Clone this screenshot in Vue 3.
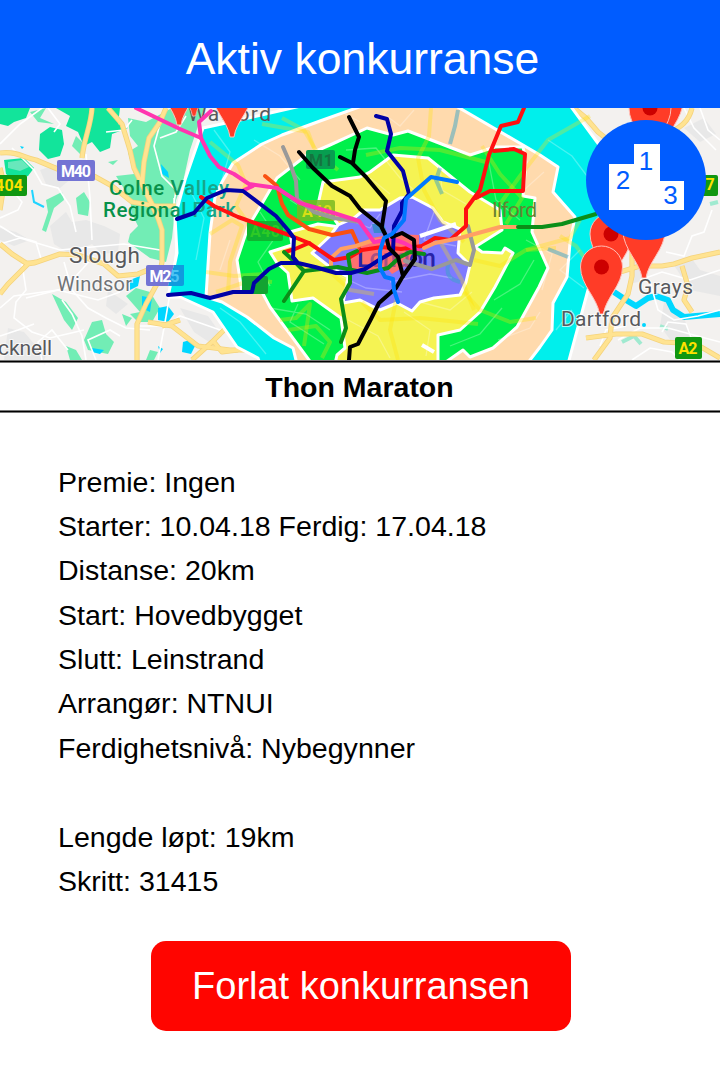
<script setup>
const details = [
  'Premie: Ingen',
  'Starter: 10.04.18 Ferdig: 17.04.18',
  'Distanse: 20km',
  'Start: Hovedbygget',
  'Slutt: Leinstrand',
  'Arrangør: NTNUI',
  'Ferdighetsnivå: Nybegynner',
  '',
  'Lengde løpt: 19km',
  'Skritt: 31415',
]

const woods = [
  'M0 108H30L26 118L14 122L8 126L0 124Z',
  'M40 134L50 127L62 130L64 144L60 156L48 159L39 150Z',
  'M56 108H120L118 124L128 128L112 134L110 148L100 152L92 142L84 146L78 132L66 126L70 116Z',
  'M4 160L24 158L34 168L28 176L14 180L6 174Z',
]
const parks = [
  'M76 136L86 146L80 154L72 146Z',
  'M76 198L84 192L90 202L88 216L78 214Z',
  'M46 200L62 192L64 200L54 208L46 232L42 230L48 212Z',
  'M30 112L46 108L40 118L54 124L38 122Z',
  'M128 118L146 122L172 108H204L190 150L183 182L176 200L172 238L166 262L150 258L128 242L130 234L138 226L132 214L130 198L116 176L134 174L128 152L138 146L130 136Z',
  'M52 294L66 302L78 318L72 330L64 320Z',
  'M92 322L102 320L106 334L114 342L108 354L88 350L84 340Z',
  'M126 296L136 288L150 292L160 308L152 322L138 322L130 314L140 312Z',
  'M66 346L76 350L82 360H70Z',
  'M122 314L132 318L126 326Z',
  'M150 350L158 352L154 360H146Z',
  'M108 162L118 160L113 165Z',
]
const builtUp = [
  'M40 170L58 164L72 178L60 188L46 184Z',
  'M50 226L66 212L72 222L86 220L104 226L120 234L118 252L102 254L92 244L70 254L54 244Z',
  'M0 228L16 232L30 240L14 246L0 240Z',
  'M8 328L24 332L36 346L48 350L44 360H4Z',
  'M108 290L128 304L116 314L106 306Z',
  'M634 250L650 254L646 280L630 284Z',
  'M672 262L690 256L700 270L720 276V296L690 290Z',
  'M664 302L680 310L692 336L672 342L660 326Z',
  'M180 308L208 316L222 336L212 344L194 332Z',
  'M684 128L704 118L716 134L700 142Z',
]
const waters = [
  'M161 164L168 172L169 178L162 174Z',
  'M130 280L140 276L138 286L130 290Z',
  'M142 296L152 298L150 312L142 308Z',
  'M158 308L168 306L174 314L168 322L158 320Z',
  'M183 342L190 340L195 346L191 354L182 352Z',
  'M92 348L104 350L100 354L92 352Z',
  'M158 346L163 349L160 353Z',
  'M20 146L24 147L22 149Z',
]
const minorRoads = [
  'M0 144L20 124L42 108', 'M12 148L34 170L42 184L58 188L70 206L76 232',
  'M48 108L60 124L54 132', 'M86 154L90 198L92 240', 'M0 244L20 238L60 250L124 244L160 250',
  'M0 226L16 236L36 242L42 262', 'M22 264L26 290L16 302L14 318L32 332L50 338L84 330',
  'M26 298L66 288L76 276L94 256', 'M64 262L72 290L88 308L106 318L126 328L150 330',
  'M0 308L14 296L58 290L98 300L120 292', 'M62 300L72 314L82 336L86 360',
  'M0 336L18 330L34 324', 'M42 360L38 342L52 330L68 350', 'M96 360L88 340L110 330L120 336',
  'M160 124L154 146L162 176L176 190L172 216', 'M186 116L176 132L160 138',
  'M174 198L178 236L172 282L164 328L158 360', 'M140 326L166 326L180 316L220 330L242 322',
  'M106 132L124 130L132 120', 'M0 178L12 190L22 202L18 210L0 218',
  'M618 340L640 328L668 328L690 334L720 342', 'M632 360L650 348L672 352L680 360',
  'M640 280L662 272L690 280L720 270', 'M666 252L684 256L692 236L704 232L712 210',
  'M650 282L658 310L674 320L698 316L720 310', 'M600 346L606 330L626 326',
  'M684 108L694 128L716 150', 'M662 332L668 322L686 324L692 340', 'M700 108L708 130L720 140',
]
const mainRoads = [
  'M0 153C18 151 24 158 36 160L60 170', 'M94 176L112 186L132 202L156 206L176 206',
  'M92 108C91 126 84 138 82 158', 'M108 108L122 124L130 150L134 168L146 192L158 218L162 230L162 262L158 282L146 304L137 324V360',
  'M166 108L160 122L149 138L144 162L142 184L158 216', 'M0 168L4 184L0 210',
  'M0 244L12 254L26 263H34L60 254L78 255L104 264L118 276L138 274L148 270', 'M0 294L8 284L28 264L36 262',
  'M148 322L172 326L198 346L230 350L258 350', 'M162 326L180 320', 'M192 360L212 342L220 334L236 318L264 306',
  'M214 342L222 352L238 350', 'M574 108L586 118L598 132L608 140', 'M692 108C688 124 678 128 668 134',
  'M632 250L632 276L628 294L612 318L610 338L594 360', 'M620 272L640 266L662 266L674 264L692 258L720 252',
  'M682 266L688 286L684 300L692 312', 'M586 338L616 334L642 334L664 342L696 344L720 358',
]
const zones = [
  { name: 'cyan', d: 'M203 128L240 120L327 100H566L572 108L597 142L625 185L606 235L588 290L568 364H260L258 358L237 347L213 312L180 297L168 297L177 253L175 217L185 180Z' },
  { name: 'peach', d: 'M233 163L262 144L282 135L320 121L362 106H456L540 155L558 167L553 192L575 217L570 243L567 277L553 303L552 330L540 347L527 364H297L293 348L274 338L247 317L222 302L206 297L210 233L215 197L222 182Z' },
  { name: 'green', d: 'M367 128L393 135L408 131L470 155L495 147H523L526 162L523 196L535 198L532 232L548 268L539 287L517 327L493 348L470 357L463 350L443 364H312L270 307L262 292L242 292L237 260L248 227L260 207L277 178L307 155L330 145Z' },
  { name: 'yellow', d: 'M323 182L360 177L370 172L393 155L428 158L470 192L500 210L502 230L475 247L482 252L502 253L505 248L513 253L495 287L480 312L460 330L438 335V364H335L337 355L345 348L341 318L313 298L292 301L288 273L277 263L270 252L292 245L290 232L318 224L340 227L332 216L317 209Z' },
  { name: 'purple', d: 'M312 253L330 236L338 225L354 218L364 210L380 210L400 198L412 197L433 208L443 222L460 229L458 253L470 265L466 282L460 295L434 298L420 302L412 311L397 303L380 310L360 300L343 303L348 277L330 267Z' },
  { name: 'red', d: 'M349 257L360 245L372 238L393 234L419 235V250L412 262L392 274L386 267L372 270L352 269Z' },
]
const zoneRoads = [
  'M210 142L238 165L246 184L236 206L250 226', 'M282 118L304 130L318 154L338 170', 'M216 292L252 280L272 282',
  'M210 234L232 220L242 226L230 262L228 292', 'M206 272L234 276L264 274', 'M262 124L308 132L314 148',
  'M431 108L429 136L418 158L424 190L440 220L464 242', 'M482 146L500 174L522 198L506 224',
  'M366 155L400 148L440 150L486 162', 'M362 302L380 320L420 318L478 324', 'M396 300L390 330L398 360',
  'M464 292L480 310L510 322L536 318', 'M474 260L500 266L526 250L556 248', 'M526 250L570 238L580 220',
  'M500 204L520 176L548 140L590 116', 'M438 238L462 280L474 310', 'M288 330L316 326L330 342L322 358',
  'M280 320L296 318L310 304L304 346', 'M300 264L330 272L350 290L374 294', 'M560 236L576 246L586 260',
]
const lines = [
  { c: '#999999', w: 4, d: 'M283 147L290 163L296 181L297 199L314 212L334 218L360 222' },
  { c: '#999999', w: 4, d: 'M405 261L432 269L456 260L470 265L474 250L468 226' },
  { c: '#fa5010', w: 4, d: 'M265 176L277 186L282 204L288 215L309 229L332 235L352 231L359 247' },
  { c: '#ffa064', w: 4, d: 'M331 269V258L341 249L356 246L371 241L384 240' },
  { c: '#ff1010', w: 4, d: 'M201 197L214 206L238 217L289 235L309 243L334 260L350 257L362 250L382 247L401 249L422 246L435 238L450 240L466 226V209L480 190L489 155L501 126L518 122L524 108' },
  { c: '#ff1010', w: 4, d: 'M494 151L514 149L525 154L523 191L490 191L476 198M309 243L295 249L285 252' },
  { c: '#ff35af', w: 4, d: 'M136 108L180 129L201 138L210 156L219 167L234 174L249 184L277 188L300 203L337 214L359 221L374 242L392 239L404 243L421 252' },
  { c: '#ff35af', w: 4, d: 'M244 190L253 186M201 138L199 122L211 111' },
  { c: '#ffa064', w: 4, d: 'M424 248L435 243L460 238L500 227H518' },
  { c: '#0b8e18', w: 4, d: 'M518 227H542L562 224L596 214' },
  { c: '#0b8e18', w: 4, d: 'M357 251L348 255L350 268L350 283L341 299L346 328L341 342M284 252L297 264L304 271L284 301M304 271L338 267L347 269L367 273L388 268L400 257L410 252L424 254' },
  { c: '#0001a6', w: 4, d: 'M177 219L194 213L207 198L226 190L243 191L276 216L288 230L294 238L293 257L297 263L281 263L269 269L254 283L252 292L233 292L210 298L191 293L168 295' },
  { c: '#0001a6', w: 4, d: 'M293 257L298 263L315 267L336 273H351L365 269L379 260L393 252L394 226L402 211V203L409 194L403 171L387 151L391 134L387 119L376 116' },
  { c: '#000000', w: 4, d: 'M299 152L313 168L332 186L350 196L360 209L381 226L386 236L389 248L398 257L403 276L396 288L379 303L371 319L358 344L350 347L349 360' },
  { c: '#000000', w: 4, d: 'M349 117L359 137L355 150L353 163M340 157L352 163L366 177L386 201L382 226M392 237L402 233L414 240L415 259L403 276' },
  { c: '#0078ff', w: 4, d: 'M457 182L431 177L406 199L404 220L392 234L384 238L380 251V268L385 277L393 279L394 290L398 302' },
]
const pins = [
  { x: 179, y: 125, s: 1 }, { x: 194, y: 116, s: 0.8 }, { x: 232, y: 137, s: 1 },
  { x: 662, y: 148, s: 1 }, { x: 650, y: 155, s: 1, dot: true },
  { x: 611, y: 281, s: 1, dot: true }, { x: 644, y: 278, s: 1 }, { x: 601.5, y: 314, s: 1, dot: true },
]
</script>

<template>
  <main class="screen">
    <header class="topbar">Aktiv konkurranse</header>
    <section class="hero">
      <svg class="map" viewBox="0 108 720 252">
        <defs>
          <linearGradient id="parkFade" gradientUnits="userSpaceOnUse" x1="165" y1="0" x2="195" y2="0">
            <stop offset="0" stop-color="#07914a" />
            <stop offset="1" stop-color="#17a68b" />
          </linearGradient>
        </defs>
        <rect y="108" width="720" height="252" fill="#f3f1ef" />
        <path v-for="d in builtUp" :key="d" :d="d" fill="#e8e8e8" />
        <path v-for="d in parks" :key="d" :d="d" fill="#72edb5" />
        <path v-for="d in woods" :key="d" :d="d" fill="#12e49b" />
        <path d="M8 162L22 160L29 167L20 171L8 168Z" fill="#68e8bc" />
        <path d="M660 326l8 3M622 342l12 -6l7 8M710 204l8 -2M632 252l6 -8" class="meadow" />
        <path v-for="d in waters" :key="d" :d="d" fill="#00d6ff" />
        <path d="M32 190L34 202L44 207" class="stream" />
        <path d="M614 292L626 300L636 306L648 298L656 296L668 300L673 310L684 317L720 314" class="river" />
        <g class="minor"><path v-for="d in minorRoads" :key="d" :d="d" /></g>
        <g class="main-casing"><path v-for="d in mainRoads" :key="d" :d="d" /></g>
        <g class="main"><path v-for="d in mainRoads" :key="d" :d="d" /></g>

        <path v-for="z in zones" :key="z.name" :d="z.d" :class="['zone', z.name]" />
        <g class="zone-minor">
          <path d="M214 130L230 152L222 180M190 190L204 218L196 260M254 140L280 156L300 180M230 240L220 270M260 212L276 236L258 262L270 286M290 200L322 220M346 150L376 148L400 178L414 190M370 178L390 194M440 166L442 190L466 204M488 158L496 200L520 220M544 172L524 190M548 140L572 156L590 180M526 240L552 254L542 290M494 300L520 284L534 260M450 346L480 334L502 308M348 320L378 336L390 358M404 312L430 330L426 356M420 302L450 310L472 292M298 304L290 322L324 344M270 308L306 314L330 330M220 308L240 322L266 354M580 250L560 270L584 288M390 282L430 274L452 278M340 276L366 288L402 292M434 212L424 240L456 246M352 221L370 228L380 214M414 110L400 126L384 114M342 112L360 122M556 330L572 310M498 340L530 328L540 312" />
        </g>
        <g class="zone-main"><path v-for="d in zoneRoads" :key="d" :d="d" /></g>
        <path d="M458 110L455 126L450 144M548 249L568 257M440 168L436 180L442 194M449 262C444 276 452 280 460 282" class="zone-water" />
        <path d="M420 236L456 224M422 345L434 352" class="divider" />
        <path d="M372 224h12l3 9h-13z" fill="#3d88cf" />

        <text x="188" y="121" class="place watford" textLength="83">Watford</text>
        <rect x="57" y="160" width="38" height="21" rx="2" fill="#7474d4" />
        <text x="76" y="176.500" class="shield" textLength="30">M40</text>
        <rect x="-6" y="175" width="33" height="21" rx="2" fill="#119711" />
        <text x="9" y="190.500" class="shield gold" textLength="28">404</text>
        <path d="M148 265H174L168 286H148Q146 286 146 284V267Q146 265 148 265Z" fill="#7474d4" />
        <path d="M174 265H184V284Q184 286 182 286H168Z" fill="#109bde" />
        <text x="164.500" y="281.500" class="shield" textLength="30">M2<tspan fill="#4cc4f4">5</tspan></text>
        <rect x="306" y="150" width="29" height="19" rx="2" fill="#079e50" />
        <text x="321" y="166" class="shield faded" textLength="24">M1</text>
        <rect x="297" y="200" width="38" height="21" rx="2" class="zone-label" />
        <text x="317" y="217" class="shield lime" textLength="30">A40</text>
        <rect x="247" y="221" width="36" height="20" rx="2" fill="#10b431" />
        <text x="265" y="237" class="shield lime dim" textLength="30">A40</text>
        <rect x="242" y="276" width="26" height="18" rx="2" fill="#13a331" />
        <rect x="690" y="175" width="28" height="21" rx="2" fill="#119711" />
        <text x="710" y="190" class="shield gold">7</text>
        <rect x="675" y="337" width="27" height="22" rx="2" fill="#119711" />
        <text x="688" y="353.500" class="shield gold" textLength="19">A2</text>

        <text x="109" y="195" class="park" textLength="120">Colne Valley</text>
        <text x="103" y="217" class="park" textLength="133">Regional Park</text>
        <text x="69" y="263" class="place large" textLength="71">Slough</text>
        <text x="57" y="291" class="place light" textLength="75">Windsor</text>
        <text x="-2" y="355" class="place" textLength="54">cknell</text>
        <text x="492" y="217" class="place ilford" textLength="45">Ilford</text>
        <text x="357" y="267" class="london" textLength="79">L<tspan fill="#a95082">ond</tspan>on</text>

        <path v-for="l in lines" :key="l.d" :d="l.d" class="route" :stroke="l.c" :stroke-width="l.w" />

        <g v-for="(p, i) in pins" :key="i" :transform="`translate(${p.x} ${p.y}) scale(${p.s})`">
          <path d="M-2 0C-4 -16 -21 -29 -21 -47A21 21 0 0 1 21 -47C21 -29 4 -16 2 0Z" class="pin" />
          <circle v-if="p.dot" cy="-47" r="7.500" fill="#cc0000" />
        </g>
        <text x="638" y="294" class="place" textLength="55">Grays</text>
        <text x="561" y="326" class="place" textLength="80">Dartford</text>
        <circle cx="644" cy="325" r="2" fill="#00d6ff" />
      </svg>
      <div class="podium">
        <svg viewBox="0 0 120 120">
          <circle cx="60" cy="60" r="60" fill="#005cff" />
          <path d="M23 44H48V24H74V61H98V90H23Z" fill="#fff" />
          <g class="ranks"><text x="60" y="50">1</text><text x="37" y="69">2</text><text x="84.500" y="84">3</text></g>
        </svg>
      </div>
    </section>
    <h1 class="name">Thon Maraton</h1>
    <section class="details">
      <p v-for="(line, i) in details" :key="i">{{ line }}</p>
    </section>
    <button class="leave">Forlat konkurransen</button>
  </main>
</template>

<style>
body { margin: 0; background: #fff; }
</style>

<style scoped>
.screen { width: 720px; height: 1072px; display: flex; flex-direction: column; overflow: hidden; background: #fff; color: #000; font-family: "Liberation Sans", Arial, sans-serif; }
.topbar { height: 108px; flex: none; box-sizing: border-box; padding: 9px 0 0 5px; display: flex; align-items: center; justify-content: center; background: #005cff; color: #fff; font-size: 44.500px; }
.hero { position: relative; height: 252px; flex: none; }
.map { display: block; width: 720px; height: 252px; font-family: Roboto, sans-serif; }
.podium { position: absolute; left: 586px; top: 12px; width: 120px; height: 120px; }
.podium svg { display: block; }
.ranks { fill: #005cff; font: 26px "Liberation Sans", Arial, sans-serif; text-anchor: middle; }
.name { height: 53px; flex: none; box-sizing: border-box; margin: 0; padding-right: 1px; display: flex; align-items: center; justify-content: center; font-size: 28.500px; line-height: 32px; background: linear-gradient(#777 1px, #000 1px 2px, #777 2px 3px, #fff 3px 50px, #777 50px 51px, #000 51px 52px, #777 52px); }
.details { padding: 46.500px 58px 0; font-size: 28.550px; }
.details p { margin: 0; height: 44.400px; line-height: 44.400px; white-space: nowrap; }
.leave { width: 420px; height: 90px; flex: none; margin: 37.500px 0 0 151px; padding: 2px 0 0; border: 0; border-radius: 15px; background: #ff0500; color: #fff; font: 38px "Liberation Sans", Arial, sans-serif; }

.minor { fill: none; stroke: #fff; stroke-width: 1.6; }
.main-casing { fill: none; stroke: #f5d37c; stroke-width: 5.200; stroke-linejoin: round; }
.main { fill: none; stroke: #ffe391; stroke-width: 3.600; stroke-linejoin: round; }
.meadow { fill: none; stroke: #a0ead0; stroke-width: 4; }
.stream { fill: none; stroke: #20d4ff; stroke-width: 2; }
.river { fill: none; stroke: #00d8ff; stroke-width: 6; stroke-linejoin: round; }
.zone { stroke: #fff; stroke-width: 3; stroke-linejoin: round; }
.cyan { fill: #00efec; }
.peach { fill: #ffdaad; }
.green { fill: #00f04b; }
.yellow { fill: #f5f353; }
.purple { fill: #7e7aff; }
.red { fill: #ff706f; stroke: none; }
.zone-minor { fill: none; stroke: #fff; stroke-opacity: .28; stroke-width: 1.300; }
.zone-main { fill: none; stroke: #ffe000; stroke-opacity: .3; stroke-width: 4; stroke-linejoin: round; }
.zone-water { fill: none; stroke: #3aa4c8; stroke-opacity: .5; stroke-width: 4; }
.divider { fill: none; stroke: #fff; stroke-width: 4; }
.zone-label { fill: #79b921; opacity: .85; }
.shield { fill: #fff; font-size: 16px; font-weight: 700; text-anchor: middle; }
.gold { fill: #ffe100; }
.faded { fill: #14743f; }
.lime { fill: #d8df16; }
.dim { fill: #2dca25; }
.park { fill: url(#parkFade); font-size: 20.500px; font-weight: 500; }
.place { fill: #58595c; font-size: 21px; stroke: #fff; stroke-width: 2px; stroke-opacity: .7; paint-order: stroke; }
.large { font-size: 22.500px; }
.light { fill: #707377; font-size: 20px; }
.watford { stroke: none; }
.ilford { fill: #668231; stroke: none; }
.london { fill: #2722a8; font-size: 25px; font-weight: 500; }
.route { fill: none; stroke-linecap: round; stroke-linejoin: round; }
.pin { fill: #ff3c27; stroke: #ffc0b8; stroke-width: 1; }
</style>
